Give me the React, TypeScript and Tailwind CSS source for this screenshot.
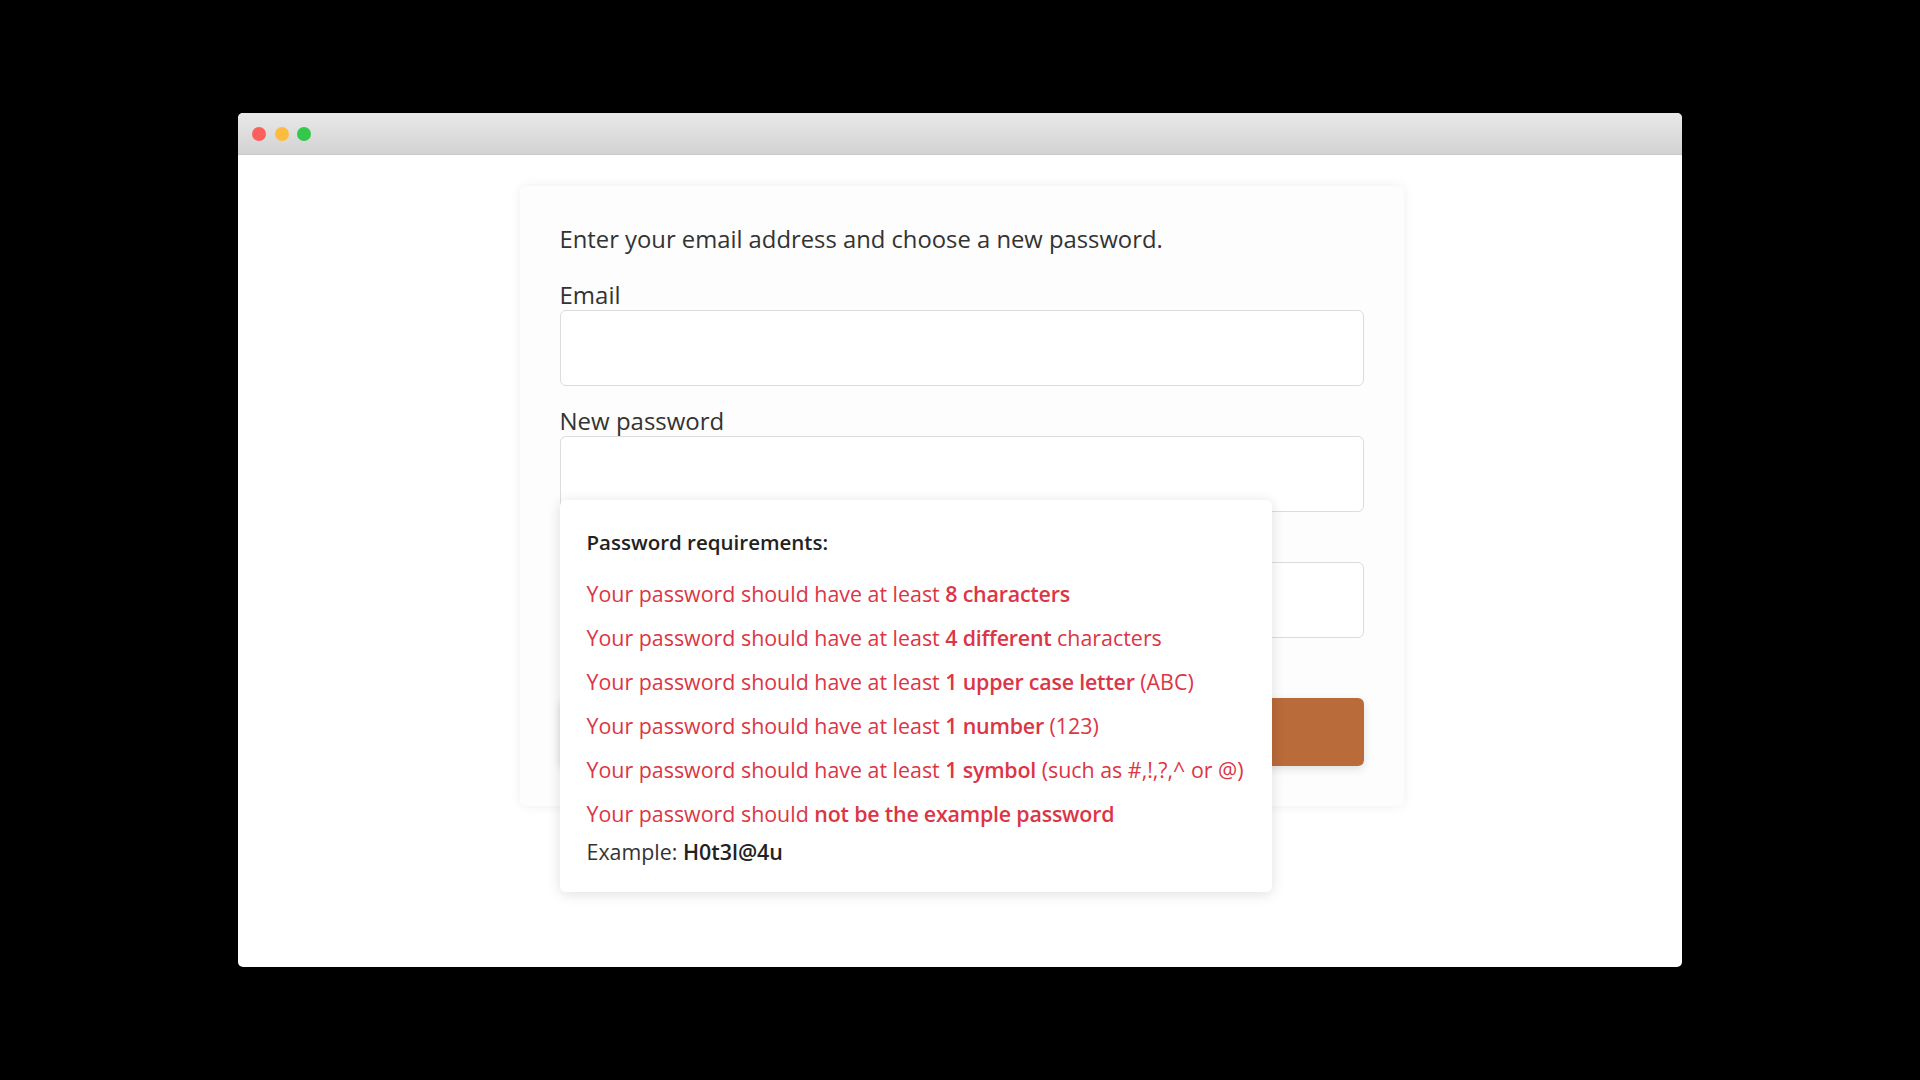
import React from "react"

const rules: { pre: string; bold: string; post?: string }[] = [
  { pre: "Your password should have at least ", bold: "8 characters" },
  { pre: "Your password should have at least ", bold: "4 different", post: " characters" },
  { pre: "Your password should have at least ", bold: "1 upper case letter", post: " (ABC)" },
  { pre: "Your password should have at least ", bold: "1 number", post: " (123)" },
  { pre: "Your password should have at least ", bold: "1 symbol", post: " (such as #,!,?,^ or @)" },
  { pre: "Your password should ", bold: "not be the example password" },
]

function Field({ label, type }: { label: string; type: string }) {
  return (
    <div className="flex flex-col">
      <label className="text-[24px] leading-[30px] text-[#333]">{label}</label>
      <input
        type={type}
        className="h-[76px] w-full rounded-md border border-[#dcdcdc] bg-white px-4 outline-none"
      />
    </div>
  )
}

function Requirements() {
  return (
    <div className="absolute left-[40px] top-[314px] w-[712px] rounded-md bg-white pl-[27px] pr-6 pt-[28px] pb-[26px] shadow-[0_2px_14px_rgba(0,0,0,0.13)]">
      <p className="text-[20.5px] leading-[28px] font-semibold text-[#222]">Password requirements:</p>
      <ul className="mt-6 flex flex-col gap-4">
        {rules.map((r, i) => (
          <li key={i} className="text-[21.4px] leading-[28px] text-[#dc3545] whitespace-nowrap">
            {r.pre}
            <span className="font-semibold tracking-[-0.2px]">{r.bold}</span>
            {r.post}
          </li>
        ))}
      </ul>
      <p className="mt-[10px] text-[21.4px] leading-[28px] text-[#333]">
        Example: <span className="font-semibold text-[#222]">H0t3l@4u</span>
      </p>
    </div>
  )
}

export default function App() {
  return (
    <div className="flex h-screen w-full items-center justify-center bg-black font-['Open_Sans',sans-serif]">
      <div className="flex h-[854px] w-[1444px] flex-col overflow-hidden rounded-[5px] bg-white">
        {/* window chrome */}
        <div className="flex h-[42px] items-center gap-[8.5px] border-b border-[#c8c8c8] bg-gradient-to-b from-[#e9e9e9] to-[#d2d2d2] pl-[14px]">
          <span className="h-[14px] w-[14px] rounded-full bg-[#fc605c]" />
          <span className="h-[14px] w-[14px] rounded-full bg-[#fdbc40]" />
          <span className="h-[14px] w-[14px] rounded-full bg-[#34c84a]" />
        </div>

        <div className="flex flex-1 justify-center pl-[3px] pt-[31px]">
          <div className="relative h-fit w-[884px] rounded-md bg-[#fdfdfd] px-10 pt-[36px] pb-10 shadow-[0_0_12px_rgba(0,0,0,0.07)]">
            <p className="text-[23.8px] leading-[34px] text-[#333]">
              Enter your email address and choose a new password.
            </p>
            <div className="mt-6 flex flex-col gap-5">
              <Field label="Email" type="email" />
              <Field label="New password" type="password" />
              <Field label="Confirm new password" type="password" />
            </div>
            <button className="mt-[60px] h-[68px] w-full rounded-md bg-[#b96b3a] text-[22px] font-semibold text-white shadow-[0_3px_8px_rgba(0,0,0,0.12)]">
              Reset password
            </button>
            <Requirements />
          </div>
        </div>
      </div>
    </div>
  )
}
